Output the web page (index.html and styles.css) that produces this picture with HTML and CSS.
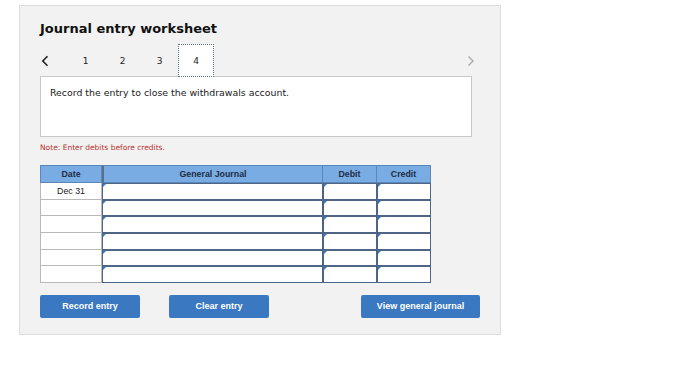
FILE: index.html
```html
<!DOCTYPE html>
<html>
<head>
<meta charset="utf-8">
<link rel="stylesheet" href="styles.css">
</head>
<body>
<div class="panel">
  <h1 class="title">Journal entry worksheet</h1>
  <div class="tabs">
    <span class="arrow prev">
      <svg width="8" height="12" viewBox="0 0 8 12"><path d="M6.5 1.2 L1.8 6 L6.5 10.8" fill="none" stroke="#222" stroke-width="1.6"/></svg>
    </span>
    <span class="tab">1</span>
    <span class="tab">2</span>
    <span class="tab">3</span>
    <span class="tab active">4</span>
    <span class="spacer"></span>
    <span class="arrow next">
      <svg width="8" height="12" viewBox="0 0 8 12"><path d="M1.5 1.5 L6 6 L1.5 10.5" fill="none" stroke="#a6a6a6" stroke-width="1.3"/></svg>
    </span>
  </div>
  <div class="instruction">Record the entry to close the withdrawals account.</div>
  <div class="note">Note: Enter debits before credits.</div>
  <div class="journal">
    <div class="th">Date</div>
    <div class="th">General Journal</div>
    <div class="th">Debit</div>
    <div class="th">Credit</div>

    <div class="date">Dec 31</div><div class="cell"></div><div class="cell"></div><div class="cell"></div>
    <div class="date"></div><div class="cell"></div><div class="cell"></div><div class="cell"></div>
    <div class="date"></div><div class="cell"></div><div class="cell"></div><div class="cell"></div>
    <div class="date"></div><div class="cell"></div><div class="cell"></div><div class="cell"></div>
    <div class="date"></div><div class="cell"></div><div class="cell"></div><div class="cell"></div>
    <div class="date"></div><div class="cell"></div><div class="cell"></div><div class="cell"></div>
  </div>
  <div class="buttons">
    <button class="btn">Record entry</button>
    <button class="btn">Clear entry</button>
    <span class="spacer"></span>
    <button class="btn wide">View general journal</button>
  </div>
</div>
</body>
</html>
```
FILE: styles.css
```css
html, body {
  margin: 0;
  padding: 0;
  background: #ffffff;
}
body {
  font-family: "DejaVu Sans", Verdana, sans-serif;
  color: #1a1a1a;
}
.panel {
  margin: 5px 0 0 19px;
  height: 328px;
  width: 460px;
  background: #f2f2f2;
  border: 1px solid #dcdcdc;
  padding: 0 0 0 20px;
  box-sizing: content-box;
}
.title {
  margin: 0;
  padding-top: 14px;
  font-size: 13px;
  line-height: 17px;
  font-weight: bold;
  color: #111;
}
.tabs {
  display: flex;
  align-items: center;
  height: 33px;
  margin-top: 7px;
  width: 440px;
  font-size: 9px;
  position: relative;
  z-index: 1;
  margin-bottom: -1px;
}
.arrow {
  display: flex;
  align-items: center;
}
.arrow.prev {
  width: 27px;
  padding-left: 1px;
  box-sizing: border-box;
}
.tab {
  width: 37px;
  height: 33px;
  display: flex;
  align-items: center;
  justify-content: center;
  box-sizing: border-box;
  color: #222;
}
.tab.active {
  width: 36px;
  background: #ffffff;
  border: 1px dotted #5f6f86;
}
.spacer {
  flex: 1;
}
.arrow.next {
  margin-right: 5px;
}
.instruction {
  width: 432px;
  height: 61px;
  box-sizing: border-box;
  background: #ffffff;
  border: 1px solid #c8c8c8;
  padding: 10px 9px;
  font-size: 9.4px;
  line-height: 12px;
  color: #1a1a1a;
}
.note {
  margin-top: 6px;
  font-size: 7.5px;
  line-height: 10px;
  color: #b4322f;
}
.journal {
  margin-top: 12px;
  display: grid;
  grid-template-columns: 62px 221px 54px 54px;
  grid-template-rows: 18px repeat(6, 16.67px);
  font-family: "Liberation Sans", Arial, sans-serif;
}
.th {
  background: #79ace3;
  border: 1px solid #5a86b8;
  border-left-width: 0;
  display: flex;
  align-items: center;
  justify-content: center;
  font-size: 8.8px;
  font-weight: bold;
  color: #1e2d45;
  box-sizing: border-box;
}
.th:first-child {
  border-left-width: 1px;
}
.th:nth-child(2) {
  border-left: 2px solid #5a6f8c;
}
.date {
  background: #ffffff;
  border: 1px solid #b9b9b9;
  border-top-width: 0;
  box-sizing: border-box;
  display: flex;
  align-items: center;
  justify-content: center;
  font-size: 8.8px;
  color: #1a1a1a;
}
.cell {
  background: #ffffff;
  border: 1px solid #4f6587;
  box-sizing: border-box;
  position: relative;
}
.cell::before {
  content: "";
  position: absolute;
  left: 0;
  top: 0;
  border-top: 3px solid #3a79c6;
  border-right: 3px solid transparent;
}
.buttons {
  margin-top: 12px;
  width: 440px;
  display: flex;
  gap: 29px;
}
.btn {
  width: 100px;
  height: 23px;
  background: #3a78c1;
  border: 0;
  border-radius: 2px;
  color: #ffffff;
  font-family: "Liberation Sans", Arial, sans-serif;
  font-size: 9px;
  font-weight: bold;
  padding: 0;
}
.btn.wide {
  width: 119px;
}
```
